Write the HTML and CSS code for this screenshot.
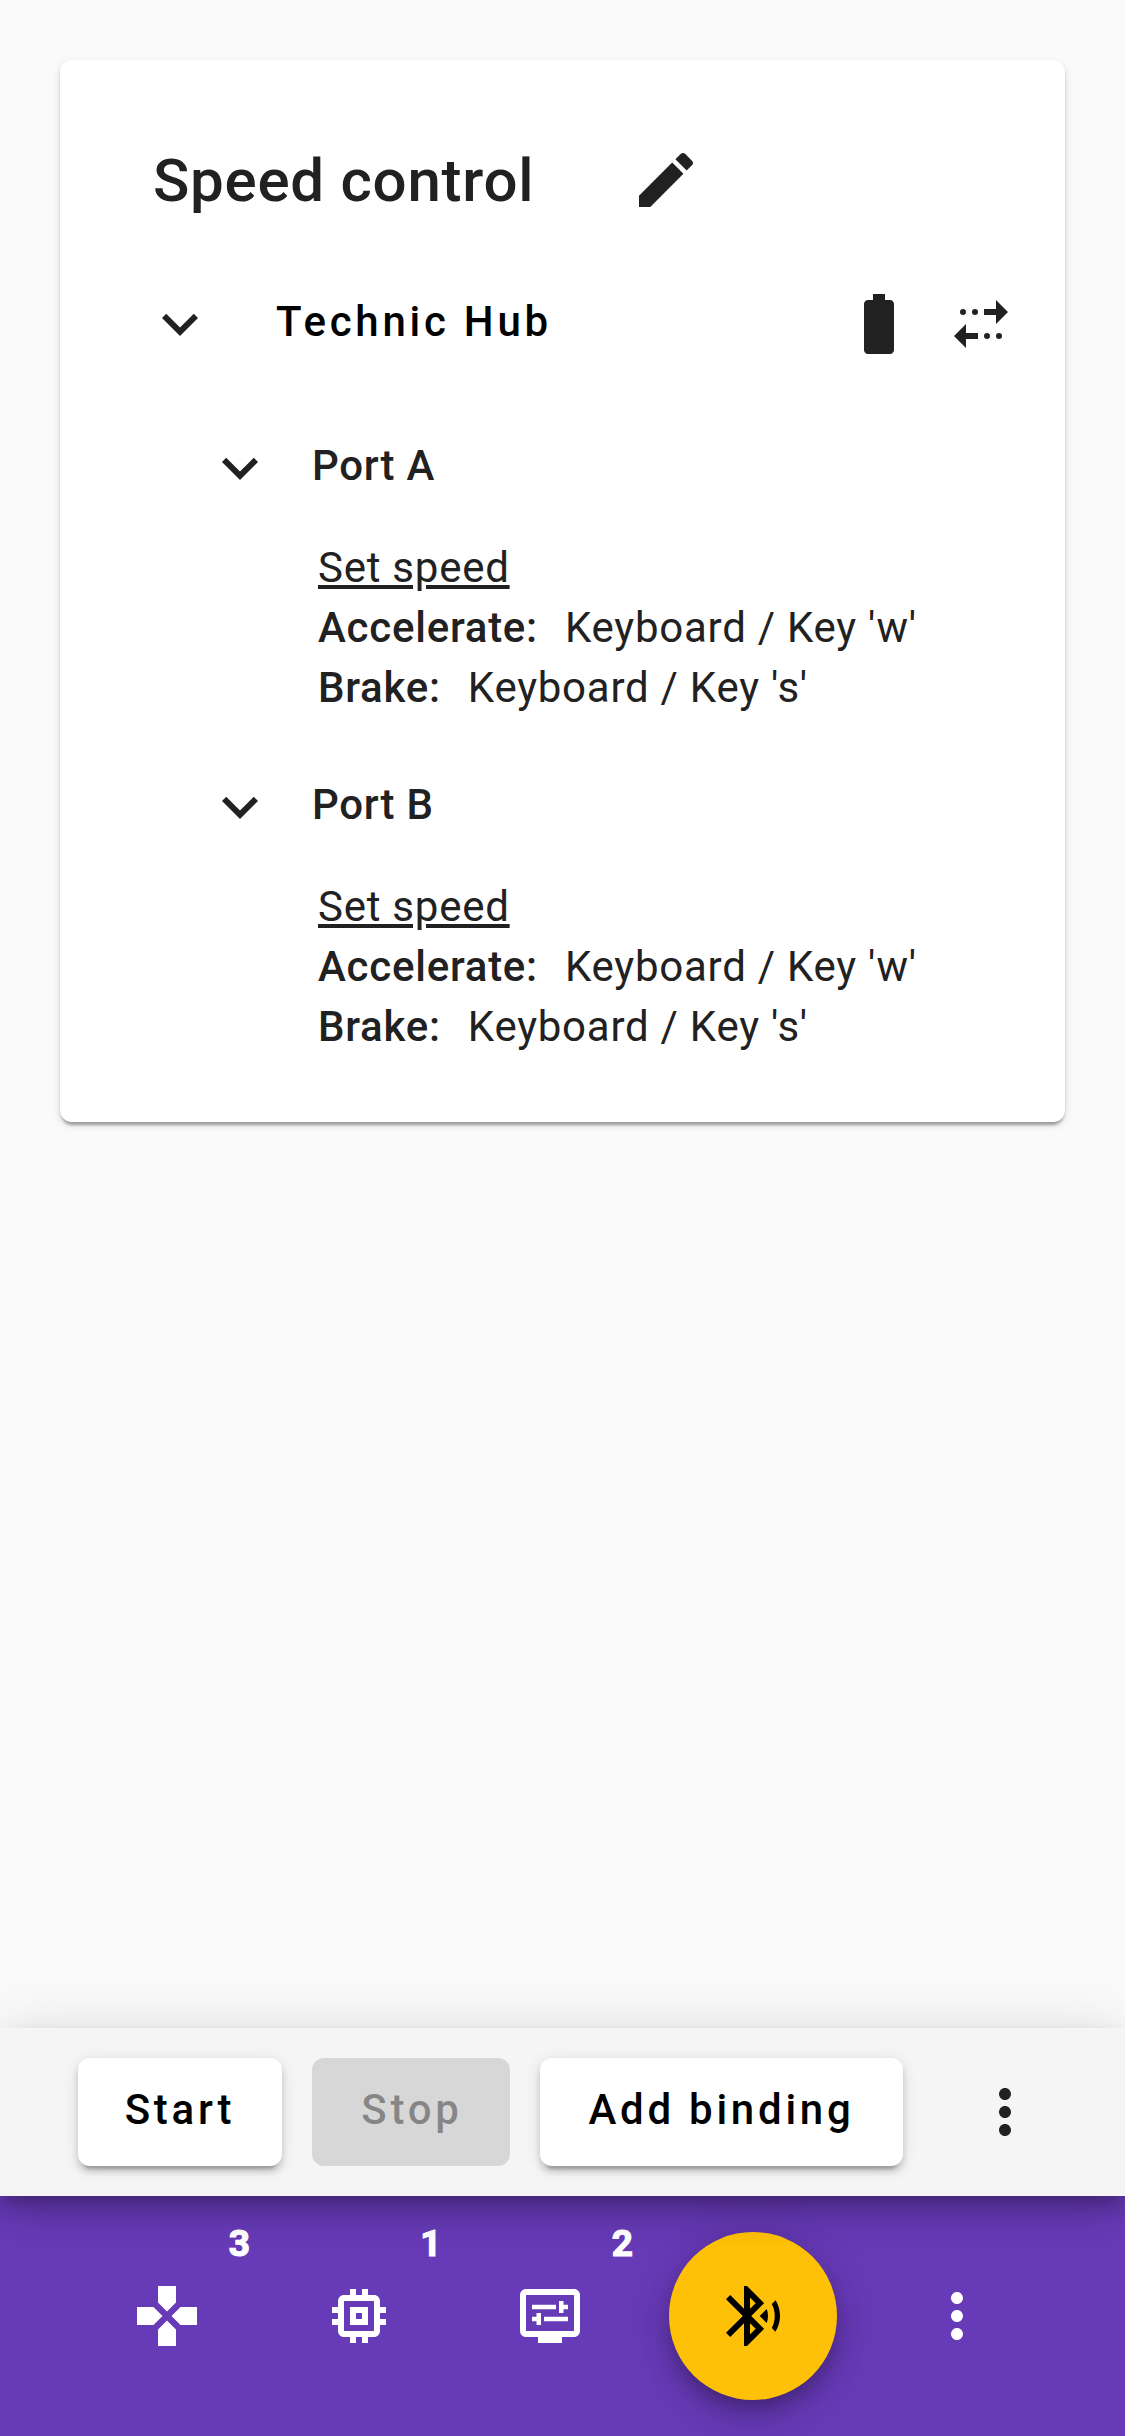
FILE: index.html
```html
<!DOCTYPE html>
<html lang="en">
<head>
<meta charset="utf-8">
<title>Speed control</title>
<link rel="stylesheet" href="styles.css">
</head>
<body>
<svg class="sprite" aria-hidden="true">
  <symbol id="expand" viewBox="0 0 24 24"><path d="M16.59 8.59L12 13.17 7.41 8.59 6 10l6 6 6-6z"/></symbol>
  <symbol id="more" viewBox="0 0 24 24"><path d="M12 8c1.1 0 2-.9 2-2s-.9-2-2-2-2 .9-2 2 .9 2 2 2zm0 2c-1.1 0-2 .9-2 2s.9 2 2 2 2-.9 2-2-.9-2-2-2zm0 6c-1.1 0-2 .9-2 2s.9 2 2 2 2-.9 2-2-.9-2-2-2z"/></symbol>
</svg>
<main class="content">
  <section class="card">
    <header class="title-row">
      <h1 class="title">Speed control</h1>
      <svg class="icon" viewBox="0 0 24 24"><path d="M3 17.25V21h3.75L17.81 9.94l-3.75-3.75L3 17.25zM20.71 7.04c.39-.39.39-1.02 0-1.41l-2.34-2.34c-.39-.39-1.02-.39-1.41 0l-1.83 1.83 3.75 3.75 1.83-1.83z"/></svg>
    </header>
    <div class="hub-row">
      <svg class="icon"><use href="#expand"/></svg>
      <span class="hub-name">Technic Hub</span>
      <svg class="icon battery" viewBox="0 0 24 24"><path d="M15.67 4H14V2h-4v2H8.33C7.6 4 7 4.6 7 5.33v15.33C7 21.4 7.6 22 8.33 22h7.33c.74 0 1.34-.6 1.34-1.33V5.33C17 4.6 16.4 4 15.67 4z"/></svg>
      <svg class="icon" viewBox="0 0 24 24"><path d="M17 4l4 4-4 4V9h-4V7h4zM7 20l-4-4 4-4v3h4v2H7z"/><circle cx="10" cy="8" r="1"/><circle cx="6" cy="8" r="1"/><circle cx="14" cy="16" r="1"/><circle cx="18" cy="16" r="1"/></svg>
    </div>
    <section class="port">
      <div class="port-row">
        <svg class="icon"><use href="#expand"/></svg>
        <span class="port-name">Port A</span>
      </div>
      <div class="binding">
        <div class="operation">Set speed</div>
        <div class="line"><b class="label">Accelerate:</b><span>Keyboard / Key 'w'</span></div>
        <div class="line"><b class="label">Brake:</b><span>Keyboard / Key 's'</span></div>
      </div>
    </section>
    <section class="port">
      <div class="port-row">
        <svg class="icon"><use href="#expand"/></svg>
        <span class="port-name">Port B</span>
      </div>
      <div class="binding">
        <div class="operation">Set speed</div>
        <div class="line"><b class="label">Accelerate:</b><span>Keyboard / Key 'w'</span></div>
        <div class="line"><b class="label">Brake:</b><span>Keyboard / Key 's'</span></div>
      </div>
    </section>
  </section>
</main>
<div class="toolbar">
  <button class="button start">Start</button>
  <button class="button stop" disabled>Stop</button>
  <button class="button add">Add binding</button>
  <svg class="icon toolbar-more"><use href="#more"/></svg>
</div>
<nav class="nav">
  <a class="nav-item">
    <svg class="icon" viewBox="0 0 24 24"><path d="M15 7.500V2H9v5.500l3 3 3-3zM7.500 9H2v6h5.500l3-3-3-3zM9 16.500V22h6v-5.500l-3-3-3 3zM16.500 9l-3 3 3 3H22V9h-5.500z"/></svg>
    <span class="badge">3</span>
  </a>
  <a class="nav-item">
    <svg class="icon" viewBox="0 0 24 24"><path d="M15 9H9v6h6V9zm-2 4h-2v-2h2v2zm8-2V9h-2V7c0-1.100-.9-2-2-2h-2V3h-2v2h-2V3H9v2H7c-1.100 0-2 .9-2 2v2H3v2h2v2H3v2h2v2c0 1.100.9 2 2 2h2v2h2v-2h2v2h2v-2h2c1.100 0 2-.9 2-2v-2h2v-2h-2v-2h2zm-4 6H7V7h10v10z"/></svg>
    <span class="badge">1</span>
  </a>
  <a class="nav-item">
    <svg class="icon" viewBox="0 0 24 24"><path fill-rule="evenodd" d="M20 3H4c-1.100 0-2 .9-2 2v12c0 1.100.9 2 2 2h4v2h8v-2h4c1.100 0 2-.9 2-2V5c0-1.100-.9-2-2-2zm0 14H4V5h16v12z"/><path d="M6 8.250h8v1.500H6zM16.500 9.750H18v-1.500h-1.500V7H15v4h1.500zM10 12.250h8v1.500h-8zM7.500 15H9v-4H7.500v1.250H6v1.500h1.500z"/></svg>
    <span class="badge">2</span>
  </a>
  <a class="fab">
    <svg class="icon" viewBox="0 0 24 24"><path d="M14.240 12.010l2.320 2.320c.28-.72.44-1.510.44-2.330 0-.82-.16-1.590-.43-2.310l-2.330 2.320zm5.290-5.300l-1.260 1.260c.63 1.210.98 2.570.98 4.020s-.36 2.820-.98 4.020l1.200 1.200c.97-1.540 1.540-3.360 1.540-5.310-.01-1.890-.55-3.670-1.480-5.190zm-3.820 1L10 2H9v7.590L4.410 5 3 6.410 8.590 12 3 17.590 4.410 19 9 14.410V22h1l5.710-5.710-4.300-4.290 4.300-4.290zM11 5.830l1.880 1.880L11 9.590V5.830zm1.880 10.460L11 18.170v-3.760l1.880 1.880z"/></svg>
  </a>
  <a class="nav-item">
    <svg class="icon"><use href="#more"/></svg>
  </a>
</nav>
</body>
</html>
```
FILE: styles.css
```css
* { box-sizing: border-box; }

body {
  margin: 0;
  height: 2436px;
  display: flex;
  flex-direction: column;
  overflow: hidden;
  background: #fafafa;
  color: #212121;
  font: 400 42px/60px Roboto, sans-serif;
  letter-spacing: 0.75px;
}

.sprite { display: none; }
.icon { display: block; flex: none; width: 72px; height: 72px; fill: currentColor; }

.content { flex: 1; padding: 60px; }

.card {
  height: 1062px;
  padding: 48px 48px 65px 84px;
  background: #fff;
  border-radius: 12px;
  box-shadow: 0 6px 3px -3px rgba(0,0,0,.2), 0 3px 3px 0 rgba(0,0,0,.14), 0 3px 9px 0 rgba(0,0,0,.12);
}

.title-row { display: flex; align-items: center; height: 144px; padding-left: 9px; }
.title { width: 477.4px; margin: 0; padding-top: 2px; font-size: 60px; font-weight: 500; line-height: 96px; }

.hub-row { display: flex; align-items: center; height: 144px; }
.hub-name {
  flex: 1;
  padding: 0 0 4px 60px;
  color: #000;
  font-weight: 500;
  letter-spacing: 3.75px;
}
.battery { margin-right: 30px; }

.port + .port { margin-top: 17px; }
.port-row { display: flex; align-items: center; gap: 36px; height: 138px; padding-left: 60px; }
.port-row .icon { margin-top: 6px; }
.port-name { padding-top: 2px; font-weight: 500; }

.binding { margin: 4px 0 0 174px; }
.operation { text-decoration: underline; }
.line { display: flex; gap: 27px; }
.label { font-weight: 500; }

.toolbar {
  position: relative;
  z-index: 1;
  display: flex;
  align-items: center;
  gap: 30px;
  height: 168px;
  padding: 0 84px 0 78px;
  background: #f5f5f5;
  box-shadow: 0 9px 15px -3px rgba(0,0,0,.2), 0 18px 30px 0 rgba(0,0,0,.14), 0 3px 54px 0 rgba(0,0,0,.12);
}
.toolbar-more { margin-left: auto; }

.button {
  height: 108px;
  padding: 0 0 4px;
  border: 0;
  border-radius: 12px;
  background: #fff;
  color: #000;
  font: 500 42px/104px Roboto, sans-serif;
  letter-spacing: 3.75px;
  box-shadow: 0 9px 3px -6px rgba(0,0,0,.2), 0 6px 6px 0 rgba(0,0,0,.14), 0 3px 15px 0 rgba(0,0,0,.12);
}
.button:disabled { background: rgba(0,0,0,.12); color: rgba(0,0,0,.38); box-shadow: none; }
.start { width: 204px; }
.stop { width: 198px; padding-left: 2px; }
.add { width: 363px; }

.nav {
  display: flex;
  align-items: center;
  justify-content: space-evenly;
  height: 240px;
  padding: 0 48.2px 0 47.8px;
  background: #673ab7;
  color: #fff;
}
.nav-item { position: relative; display: grid; place-items: center; width: 144px; height: 144px; }
.badge {
  position: absolute;
  top: -33px;
  left: 111px;
  width: 66px;
  font-size: 37px;
  font-weight: 700;
  line-height: 66px;
  letter-spacing: 0;
  text-align: center;
  -webkit-text-stroke: 1.2px currentColor;
}
.fab {
  display: grid;
  place-items: center;
  width: 168px;
  height: 168px;
  margin: 0 .6px 0 -.6px;
  border-radius: 50%;
  background: #ffc107;
  color: #000;
  box-shadow: 0 9px 15px -3px rgba(0,0,0,.2), 0 18px 30px 0 rgba(0,0,0,.14), 0 3px 54px 0 rgba(0,0,0,.12);
}
```
